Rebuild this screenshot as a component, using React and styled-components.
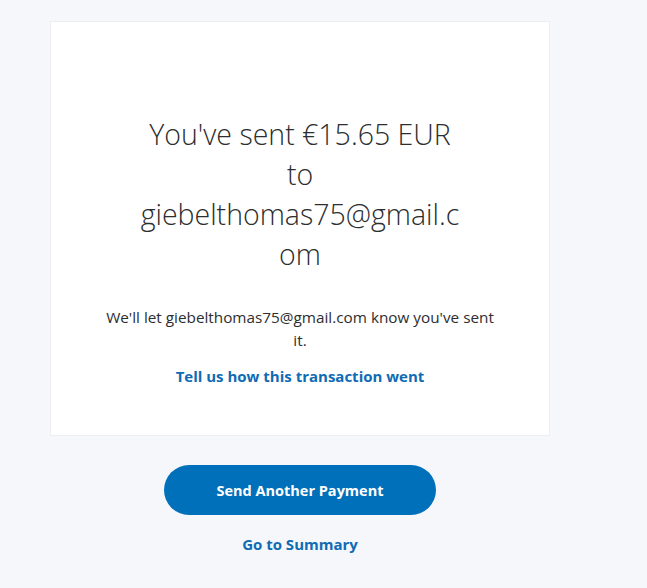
import React from 'react';
import styled, { createGlobalStyle } from 'styled-components';

const GlobalStyle = createGlobalStyle`
  html, body {
    margin: 0;
    padding: 0;
    background: #f5f7fa;
  }
  body {
    font-family: "Open Sans", "Noto Sans", sans-serif;
    color: #2c2e2f;
  }
`;

const Page = styled.div`
  width: 500px;
  padding: 21px 0 0 50px;
  display: flex;
  flex-direction: column;
  align-items: center;
`;

const Card = styled.div`
  box-sizing: border-box;
  width: 500px;
  height: 415px;
  background: #fff;
  border: 1px solid #eceef0;
  display: flex;
  flex-direction: column;
  align-items: center;
  padding: 92px 40px 0;
`;

const Title = styled.h1`
  margin: 0;
  width: 326px;
  font-size: 28.5px;
  font-weight: 300;
  line-height: 40px;
  text-align: center;
  overflow-wrap: anywhere;
  color: #2c2e2f;
`;

const Note = styled.p`
  margin: 32px 0 0;
  width: 392px;
  font-size: 15.3px;
  line-height: 23px;
  text-align: center;
  color: #2c2e2f;
`;

const TextLink = styled.a`
  display: block;
  margin-top: ${({ $gap }) => $gap}px;
  font-size: 15px;
  font-weight: 700;
  color: #0f6bb3;
  text-decoration: none;
  text-align: center;
  cursor: pointer;
`;

const Actions = styled.div`
  display: flex;
  flex-direction: column;
  align-items: center;
  margin-top: 29px;
`;

const PrimaryButton = styled.button`
  width: 272px;
  height: 50px;
  border: none;
  border-radius: 25px;
  background: #0070ba;
  color: #fff;
  font-family: "Open Sans", "Noto Sans", sans-serif;
  font-size: 14.5px;
  font-weight: 700;
  cursor: pointer;
`;

export default function App() {
  return (
    <>
      <GlobalStyle />
      <Page>
        <Card>
          <Title>You've sent €15.65 EUR to giebelthomas75@gmail.com</Title>
          <Note>We'll let giebelthomas75@gmail.com know you've sent it.</Note>
          <TextLink $gap={14}>Tell us how this transaction went</TextLink>
        </Card>
        <Actions>
          <PrimaryButton>Send Another Payment</PrimaryButton>
          <TextLink $gap={19}>Go to Summary</TextLink>
        </Actions>
      </Page>
    </>
  );
}
